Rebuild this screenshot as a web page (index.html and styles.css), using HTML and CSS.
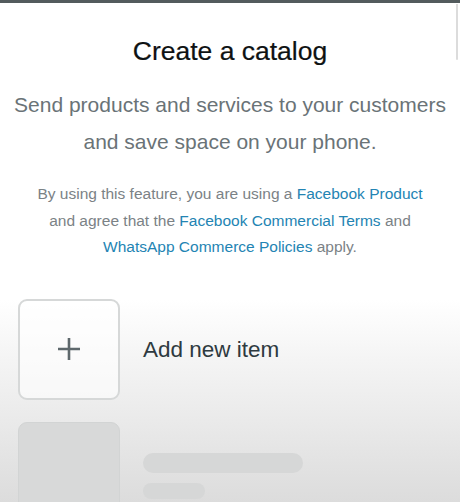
FILE: index.html
```html
<!DOCTYPE html>
<html lang="en">
<head>
<meta charset="utf-8">
<title>Create a catalog</title>
<link rel="stylesheet" href="styles.css">
</head>
<body>
<div class="topbar"></div>
<div class="scroll-edge"></div>
<main class="sheet">
  <h1 class="title">Create a catalog</h1>
  <p class="subtitle">Send products and services to your customers and save space on your phone.</p>
  <p class="legal">By using this feature, you are using a <a href="#">Facebook Product</a><br>and agree that the <a href="#">Facebook Commercial Terms</a> and<br><a href="#">WhatsApp Commerce Policies</a> apply.</p>
  <div class="items">
    <div class="item">
      <div class="thumb add">
        <svg width="26" height="26" viewBox="0 0 26 26" aria-hidden="true"><path d="M13 2v22M2 13h22" stroke="#5e686c" stroke-width="2.6" fill="none"/></svg>
      </div>
      <span class="item-label">Add new item</span>
    </div>
    <div class="item placeholder">
      <div class="thumb ghost"></div>
      <div class="bars">
        <div class="bar long"></div>
        <div class="bar short"></div>
      </div>
    </div>
  </div>
</main>
</body>
</html>
```
FILE: styles.css
```css
* { box-sizing: border-box; }
html, body { margin: 0; padding: 0; }
body {
  width: 460px;
  height: 502px;
  overflow: hidden;
  position: relative;
  font-family: "Liberation Sans", Arial, sans-serif;
  background: linear-gradient(to bottom, #ffffff 0px, #ffffff 300px, #f4f4f4 360px, #eaeaea 420px, #dcdcdc 502px);
}
.topbar {
  height: 3px;
  background: #535b5d;
}
.scroll-edge {
  position: absolute;
  right: 2px;
  top: 4px;
  width: 2px;
  height: 56px;
  background: #dcdcdc;
  border-radius: 0 0 2px 2px;
}
.sheet {
  display: flex;
  flex-direction: column;
  align-items: stretch;
}
.title {
  margin: 33px 0 0;
  font-size: 26.5px;
  font-weight: 400;
  line-height: 31px;
  text-align: center;
  color: #0e1213;
  -webkit-text-stroke: 0.2px #0e1213;
}
.subtitle {
  margin: 19px 0 0;
  font-size: 21px;
  line-height: 37px;
  text-align: center;
  color: #6a7377;
  padding: 0 10px;
}
.legal {
  margin: 21px 0 0;
  font-size: 15.5px;
  line-height: 26.5px;
  text-align: center;
  color: #7b8286;
}
.legal a {
  color: #2384b3;
  text-decoration: none;
}
.items {
  margin-top: 38px;
  padding-left: 18px;
  display: flex;
  flex-direction: column;
  gap: 22px;
}
.item {
  display: flex;
  align-items: center;
  gap: 23px;
}
.thumb {
  width: 102px;
  height: 101px;
  border-radius: 9px;
  flex: none;
}
.thumb.add {
  border: 2px solid #d6d8d8;
  display: flex;
  align-items: center;
  justify-content: center;
  background: rgba(255,255,255,0.6);
}
.thumb.ghost {
  background: #d8d9d9;
  border: 1px solid #d2d4d4;
}
.item-label {
  font-size: 22.5px;
  color: #2e3a40;
  padding-top: 2px;
}
.bars {
  display: flex;
  flex-direction: column;
  gap: 10px;
  margin-top: 8px;
}
.bar {
  background: #d6d7d7;
}
.bar.long {
  width: 160px;
  height: 20px;
  border-radius: 10px;
}
.bar.short {
  width: 62px;
  height: 16px;
  border-radius: 8px;
}
```
